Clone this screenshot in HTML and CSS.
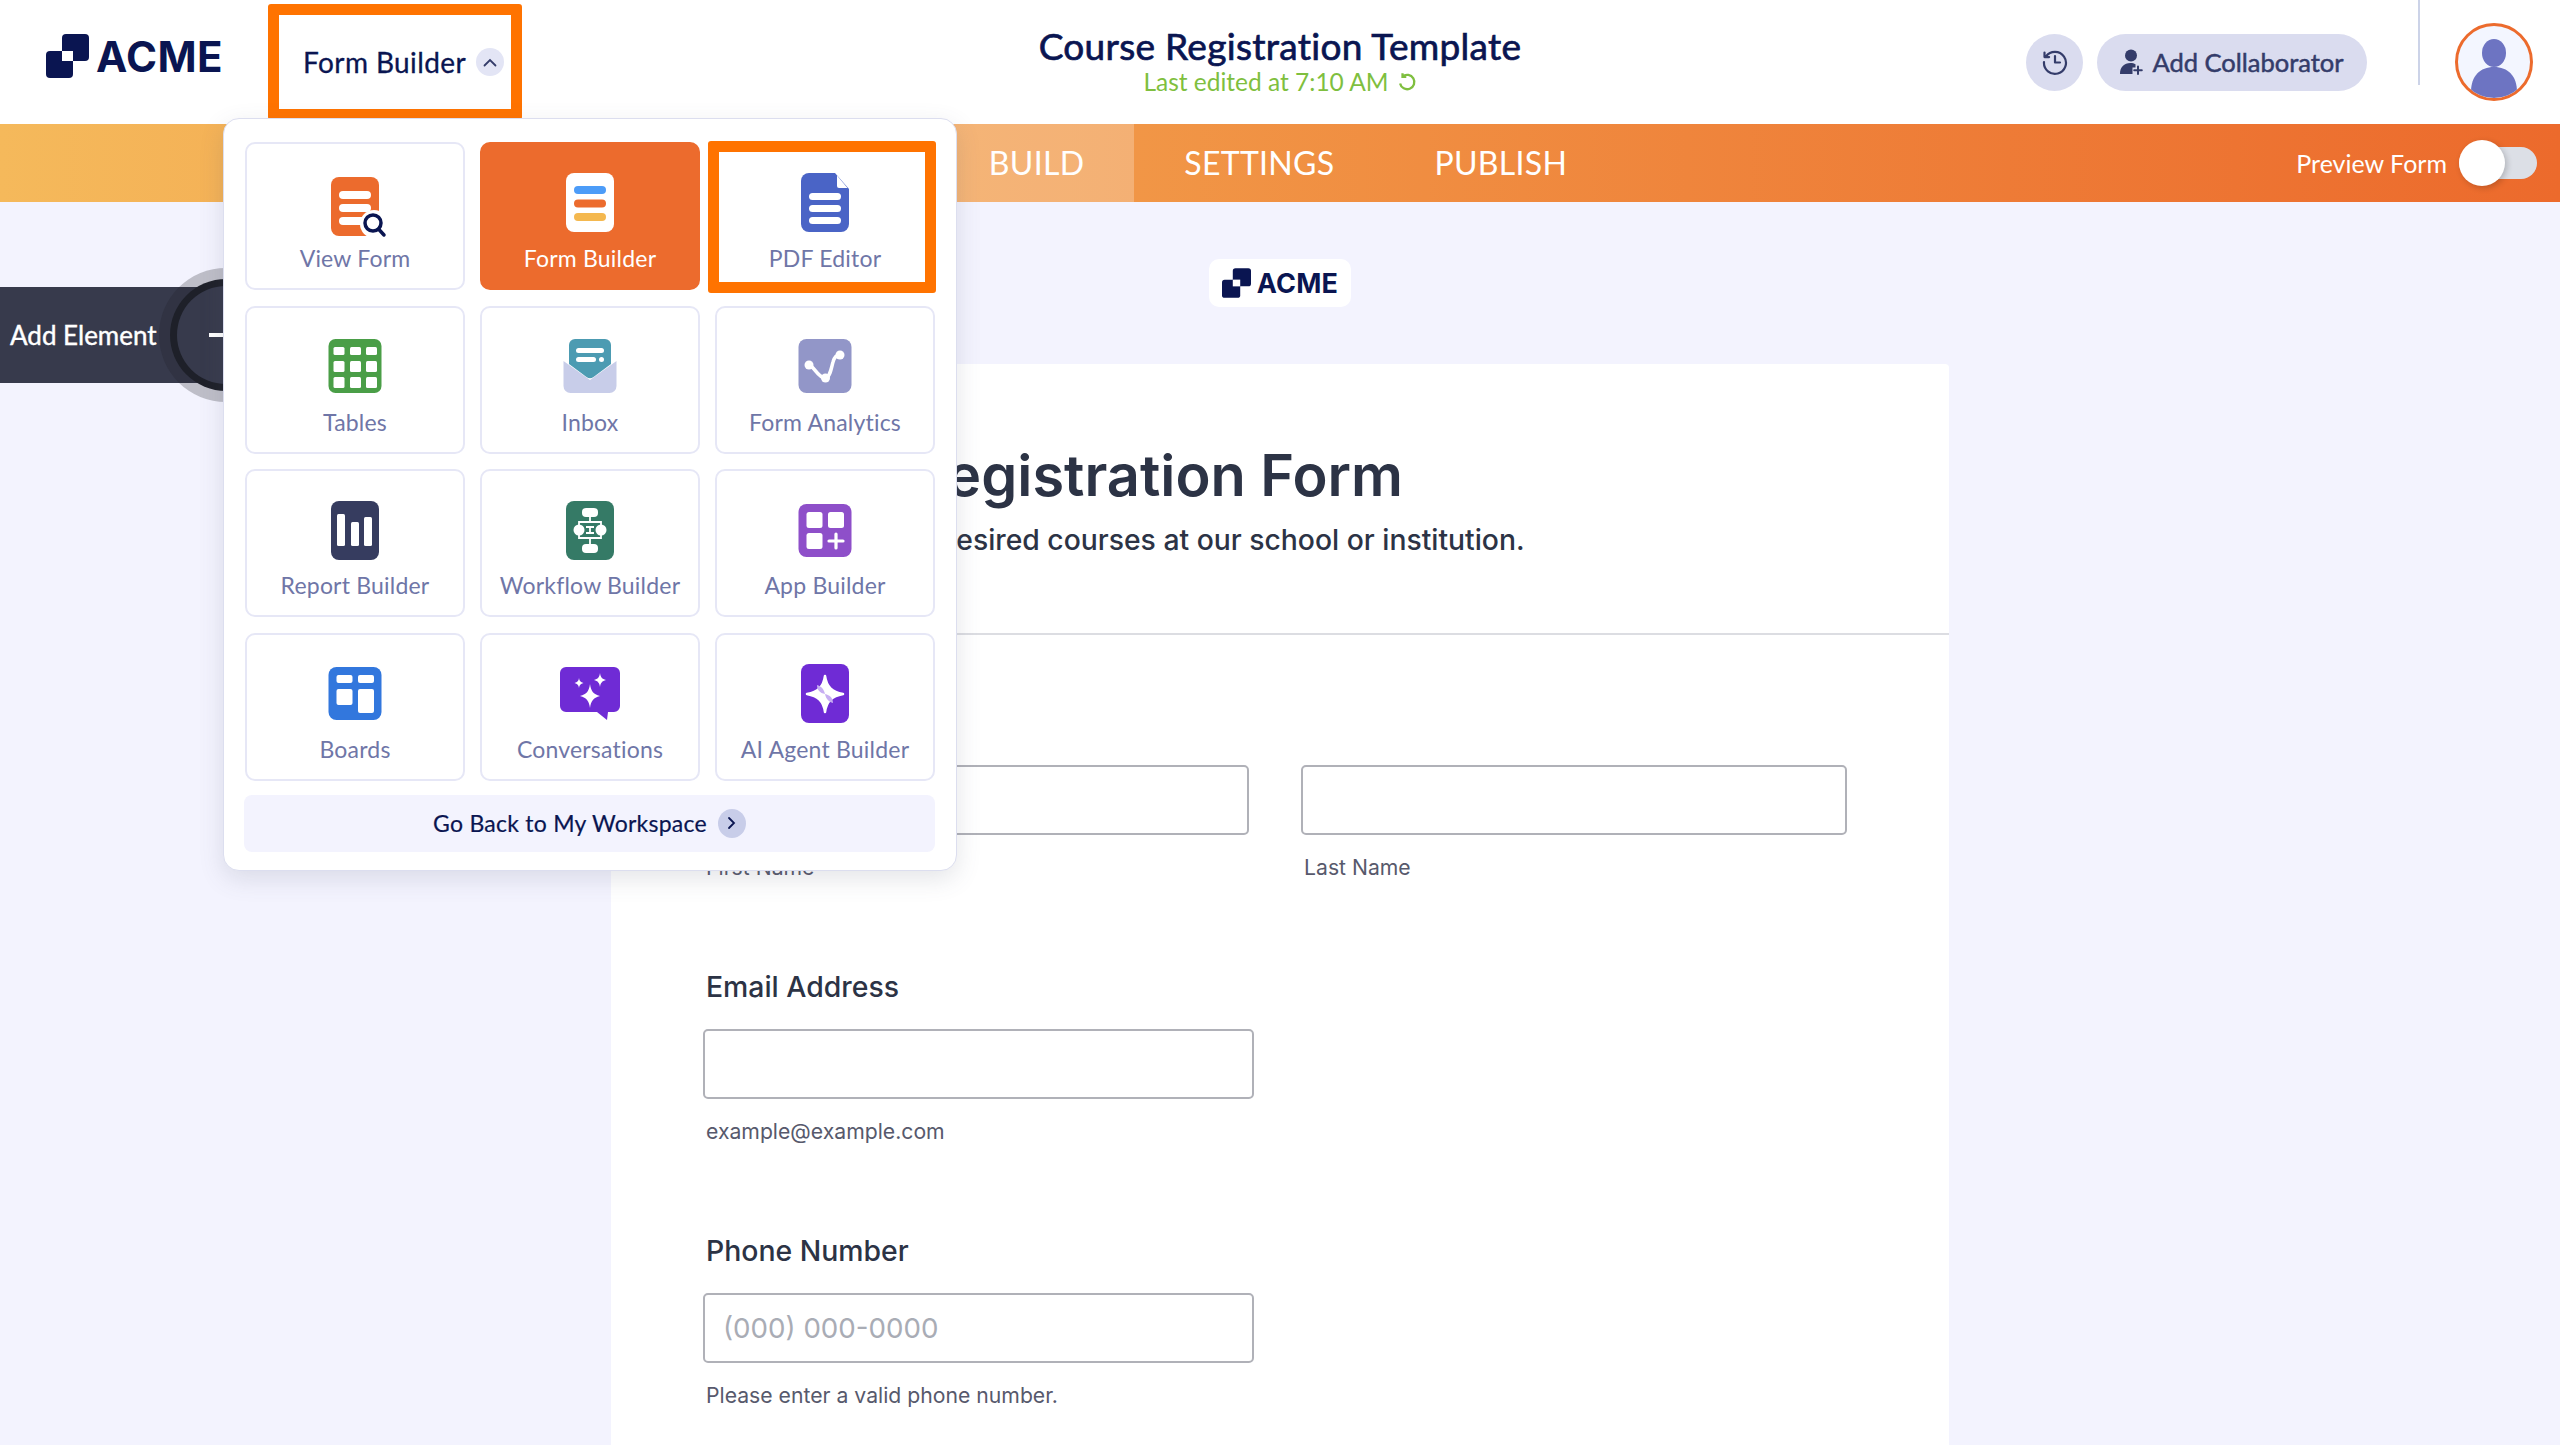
FILE: index.html
```html
<!DOCTYPE html>
<html lang="en">
<head>
    <meta charset="UTF-8">
    <title>Course Registration Template</title>
    <link rel="stylesheet" href="styles.css">
</head>
<body>
    <svg class="defs" width="0" height="0">
        <symbol id="logo" viewBox="0 0 43 44">
            <rect x="16" y="0" width="27" height="27" rx="4" fill="#0a1551"/>
            <rect x="0" y="17" width="27" height="27" rx="4" fill="#0a1551"/>
            <rect x="16" y="17" width="11" height="10" fill="#fff"/>
        </symbol>
    </svg>

    <!-- top bar -->
    <header class="topbar">
        <div class="topbar-left">
            <div class="brand">
                <svg class="brand-mark"><use href="#logo"/></svg>
                <span class="brand-name">ACME</span>
            </div>
            <div class="app-switch">
                <span>Form Builder</span>
                <span class="round-btn">
                    <svg width="14" height="9" viewBox="0 0 14 9"><path d="M1.5 7.5 7 2l5.5 5.5" fill="none" stroke="#343c6a" stroke-width="1.8" stroke-linecap="round"/></svg>
                </span>
                <div class="mark mark-switch"></div>
            </div>
        </div>
        <div class="doc-title">
            <div class="doc-name">Course Registration Template</div>
            <div class="doc-status">Last edited at 7:10 AM
                <svg width="20" height="20" viewBox="0 0 20 20"><path d="M5.5 4.5a7.2 7.2 0 1 1-2.4 7M5.5 1.2v3.6h3.8" fill="none" stroke="#7fbf3f" stroke-width="2.3"/></svg>
            </div>
        </div>
        <div class="topbar-right">
            <button class="history-btn">
                <svg width="28" height="28" viewBox="0 0 28 28"><path d="M5 8.5A11 11 0 1 1 3 14M3.5 4.5v4.6h4.6M14 8v6.5h5" fill="none" stroke="#343c6a" stroke-width="2.2" stroke-linecap="round" stroke-linejoin="round"/></svg>
            </button>
            <button class="collab-btn">
                <svg width="24" height="26" viewBox="0 0 24 26"><circle cx="11" cy="6.5" r="6" fill="#343c6a"/><path d="M0 25c0-7 4-11 10.500-11 2 0 3.500.4 5 1.200v3.300h-3V25z" fill="#343c6a"/><path d="M18 17.500V25M14.200 21.300h7.600" stroke="#343c6a" stroke-width="2" stroke-linecap="round"/></svg>
                Add Collaborator
            </button>
            <div class="avatar">
                <svg width="72" height="72" viewBox="0 0 72 72"><ellipse cx="36" cy="27" rx="12" ry="14" fill="#6d74c2"/><path d="M13 66c0-16 9-25 23-25s23 9 23 25q-10 6-23 6t-23-6z" fill="#6d74c2"/></svg>
            </div>
        </div>
    </header>

    <!-- tabs -->
    <nav class="tabbar">
        <div></div>
        <div class="tabs">
            <a class="tab active">BUILD</a>
            <a class="tab">SETTINGS</a>
            <a class="tab">PUBLISH</a>
        </div>
        <div class="preview">
            <span>Preview Form</span>
            <span class="toggle"><span class="knob"></span></span>
        </div>
    </nav>

    <!-- app menu -->
    <div class="app-menu">
        <div class="app-grid">
            <a class="app-card">
                <svg class="app-icon" viewBox="0 0 70 66"><rect x="11" y="5" width="48" height="59" rx="8" fill="#ec6b2d"/><rect x="19" y="19" width="32" height="8" rx="4" fill="#fff"/><rect x="19" y="32" width="32" height="8" rx="4" fill="#fff"/><rect x="19" y="45" width="32" height="8" rx="4" fill="#fff"/><circle cx="54" cy="52" r="14" fill="#fff"/><circle cx="53" cy="51" r="8" fill="#fff" stroke="#0a1551" stroke-width="3.500"/><path d="M58.500 57 64 63" stroke="#0a1551" stroke-width="3.500" stroke-linecap="round"/></svg>
                <span class="app-label">View Form</span>
            </a>
            <a class="app-card current">
                <svg class="app-icon" viewBox="0 0 70 66"><rect x="11" y="1" width="48" height="59" rx="8" fill="#fff"/><rect x="19" y="14" width="32" height="8" rx="4" fill="#4c9cf8"/><rect x="19" y="27.500" width="32" height="8" rx="4" fill="#ec6b2d"/><rect x="19" y="41" width="32" height="8" rx="4" fill="#f4b84f"/></svg>
                <span class="app-label">Form Builder</span>
            </a>
            <a class="app-card">
                <svg class="app-icon" viewBox="0 0 70 66"><path d="M19 1h26l14 16v35a8 8 0 0 1-8 8H19a8 8 0 0 1-8-8V9a8 8 0 0 1 8-8z" fill="#4a64c6"/><path d="M47 3.500 57.500 16H49a2 2 0 0 1-2-2z" fill="#fff"/><rect x="19" y="21" width="32" height="7" rx="3.500" fill="#fff"/><rect x="19" y="33" width="32" height="7" rx="3.500" fill="#fff"/><rect x="19" y="45" width="32" height="7" rx="3.500" fill="#fff"/></svg>
                <span class="app-label">PDF Editor</span>
                <div class="mark mark-card"></div>
            </a>
            <a class="app-card">
                <svg class="app-icon" viewBox="0 0 70 66"><rect x="8.500" y="3" width="53" height="54" rx="7" fill="#4a9e47"/><g fill="#fff"><rect x="13.500" y="11" width="11" height="8" rx="1.500"/><rect x="30" y="11" width="11" height="8" rx="1.500"/><rect x="46" y="11" width="11" height="8" rx="1.500"/><rect x="13.500" y="25" width="11" height="11" rx="1.500"/><rect x="30" y="25" width="11" height="11" rx="1.500"/><rect x="46" y="25" width="11" height="11" rx="1.500"/><rect x="13.500" y="41" width="11" height="11" rx="1.500"/><rect x="30" y="41" width="11" height="11" rx="1.500"/><rect x="46" y="41" width="11" height="11" rx="1.500"/></g></svg>
                <span class="app-label">Tables</span>
            </a>
            <a class="app-card">
                <svg class="app-icon" viewBox="0 0 70 66"><path d="M8.500 25 35 44l26.500-19v25a7 7 0 0 1-7 7h-39a7 7 0 0 1-7-7z" fill="#c8cde9"/><path d="M20 3h30a6 6 0 0 1 6 6v19L38.500 41a6 6 0 0 1-7 0L14 28V9a6 6 0 0 1 6-6z" fill="#4c9bb2"/><rect x="21" y="12" width="28" height="5" rx="2.500" fill="#fff"/><rect x="21" y="21" width="20" height="5" rx="2.500" fill="#fff"/><circle cx="46.500" cy="23.500" r="2.500" fill="#fff"/></svg>
                <span class="app-label">Inbox</span>
            </a>
            <a class="app-card">
                <svg class="app-icon" viewBox="0 0 70 66"><rect x="8.500" y="3" width="53" height="54" rx="8" fill="#9296c8"/><path d="M19 29c5 1 9 13 16 13 5 0 6-9 8-16 1-4 3-7 7-7" fill="none" stroke="#fff" stroke-width="3.500"/><circle cx="19" cy="29" r="4.500" fill="#fff"/><circle cx="35.500" cy="42" r="4.500" fill="#fff"/><circle cx="50" cy="19" r="4.500" fill="#fff"/></svg>
                <span class="app-label">Form Analytics</span>
            </a>
            <a class="app-card">
                <svg class="app-icon" viewBox="0 0 70 66"><rect x="11" y="2" width="48" height="59" rx="8" fill="#363c5f"/><rect x="17" y="15" width="8" height="32" rx="1.500" fill="#fff"/><rect x="31" y="23" width="8" height="24" rx="1.500" fill="#fff"/><rect x="44" y="18" width="8" height="29" rx="1.500" fill="#fff"/></svg>
                <span class="app-label">Report Builder</span>
            </a>
            <a class="app-card">
                <svg class="app-icon" viewBox="0 0 70 66"><rect x="11" y="2" width="48" height="59" rx="8" fill="#357a66"/><g fill="#fff"><rect x="27" y="9" width="16" height="9" rx="4"/><rect x="27" y="45" width="16" height="9" rx="4"/><circle cx="24" cy="31" r="5.500"/><circle cx="46" cy="31" r="5.500"/><rect x="31" y="27" width="8" height="2"/><rect x="31" y="33" width="8" height="2"/></g><path d="M35 18v5M35 39v6M35 27v8M24 31v-8h22v8M24 31v8h22v-8" fill="none" stroke="#fff" stroke-width="1.800"/></svg>
                <span class="app-label">Workflow Builder</span>
            </a>
            <a class="app-card">
                <svg class="app-icon" viewBox="0 0 70 66"><rect x="8.500" y="5" width="53" height="53" rx="8" fill="#8e4fc9"/><g fill="#fff"><rect x="16.500" y="13" width="16" height="16" rx="2.500"/><rect x="38" y="13" width="16" height="16" rx="2.500"/><rect x="16.500" y="34" width="16" height="16" rx="2.500"/></g><path d="M46 35v14M39 42h14" stroke="#fff" stroke-width="3.200" stroke-linecap="round"/></svg>
                <span class="app-label">App Builder</span>
            </a>
            <a class="app-card">
                <svg class="app-icon" viewBox="0 0 70 66"><rect x="8.500" y="4" width="53" height="53" rx="8" fill="#3277dd"/><g fill="#fff"><rect x="16.500" y="12" width="16" height="8" rx="2"/><rect x="38" y="12" width="16" height="8" rx="2"/><rect x="16.500" y="26" width="16" height="16" rx="2"/><rect x="38" y="26" width="16" height="24" rx="2"/></g></svg>
                <span class="app-label">Boards</span>
            </a>
            <a class="app-card">
                <svg class="app-icon" viewBox="0 0 70 66"><path d="M11 4h48a6 6 0 0 1 6 6v33a6 6 0 0 1-6 6h-6l-1 8-10-8H11a6 6 0 0 1-6-6V10a6 6 0 0 1 6-6z" fill="#6f2bd5"/><path d="M35 21c1 7 3 10 10 12-7 2-9 5-10 12-1-7-3-10-10-12 7-2 9-5 10-12zM45 10c.6 4 2 6 6 7-4 1-5.400 3-6 7-.6-4-2-6-6-7 4-1 5.400-3 6-7zM24 15c.4 3 1.500 4 4.500 5-3 1-4.100 2-4.500 5-.4-3-1.500-4-4.500-5 3-1 4.100-2 4.500-5z" fill="#fff"/></svg>
                <span class="app-label">Conversations</span>
            </a>
            <a class="app-card">
                <svg class="app-icon" viewBox="0 0 70 66"><rect x="11" y="1" width="48" height="59" rx="8" fill="#6f2bd5"/><path d="M35 13c1.500 11 7 16 18 18-11 2-16.500 7-18 18-1.500-11-7-16-18-18 11-2 16.500-7 18-18z" fill="#fff" stroke="#fff" stroke-width="2.500" stroke-linejoin="round"/><path d="M27 22c4 1 7 4 8 9-5-1-8-4-8-9zM43 40c-4-1-7-4-8-9 5 1 8 4 8 9z" fill="#c7aef2"/></svg>
                <span class="app-label">AI Agent Builder</span>
            </a>
        </div>
        <a class="back-link">
            <span>Go Back to My Workspace</span>
            <span class="back-arrow">
                <svg width="9" height="14" viewBox="0 0 9 14"><path d="M2 2l5 5-5 5" fill="none" stroke="#0a1551" stroke-width="1.800" stroke-linecap="round"/></svg>
            </span>
        </a>
    </div>

    <!-- add element tab -->
    <div class="add-element">
        <span>Add Element</span>
        <span class="add-circle"><span class="add-dash"></span></span>
    </div>

    <!-- form preview -->
    <main class="stage">
        <div class="form-logo">
            <svg class="form-logo-mark"><use href="#logo"/></svg>
            <span>ACME</span>
        </div>
        <section class="form-card">
            <div class="form-head">
                <h1>Course Registration Form</h1>
                <p>Register for your desired courses at our school or institution.</p>
            </div>
            <div class="form-body">
                <div class="field">
                    <div class="field-label">&nbsp;</div>
                    <div class="name-row">
                        <div class="name-col">
                            <input type="text" class="wide">
                            <span class="field-sub">First Name</span>
                        </div>
                        <div class="name-col">
                            <input type="text" class="wide">
                            <span class="field-sub">Last Name</span>
                        </div>
                    </div>
                </div>
                <div class="field">
                    <label class="field-label">Email Address</label>
                    <input type="text">
                    <span class="field-sub">example@example.com</span>
                </div>
                <div class="field">
                    <label class="field-label">Phone Number</label>
                    <input type="text" placeholder="(000) 000-0000">
                    <span class="field-sub">Please enter a valid phone number.</span>
                </div>
            </div>
        </section>
    </main>
</body>
</html>
```

FILE: styles.css
```css
* {
    box-sizing: border-box;
}

html, body {
    height: 1445px;
    margin: 0;
    overflow: hidden;
}

body {
    position: relative;
    font-family: 'Lato', 'Liberation Sans', sans-serif;
    background-color: #f3f3fe;
    color: #0a1551;
}

.defs {
    position: absolute;
}

/* top bar */
.topbar {
    height: 124px;
    padding: 0 27px;
    display: grid;
    grid-template-columns: 1fr auto 1fr;
    align-items: center;
    background-color: #fff;
}

.topbar-left {
    display: flex;
    align-items: center;
    padding-left: 19px;
}

.brand {
    display: flex;
    align-items: center;
    gap: 7px;
    width: 257px;
    margin-bottom: 12px;
}

.brand-mark {
    width: 43px;
    height: 44px;
}

.brand-name {
    font-family: 'Inter', sans-serif;
    font-size: 42px;
    font-weight: 700;
    letter-spacing: .4px;
}

.app-switch {
    position: relative;
    display: flex;
    align-items: center;
    gap: 10px;
    font-size: 28px;
    letter-spacing: .4px;
    -webkit-text-stroke: .3px;
}

.round-btn {
    width: 28px;
    height: 28px;
    border-radius: 50%;
    background-color: #e3e5f5;
    display: flex;
    align-items: center;
    justify-content: center;
}

/* orange marks drawn over the screenshot */
.mark {
    position: absolute;
    border: 11px solid #ff7300;
    border-radius: 3px;
}

.mark-switch {
    top: 50%;
    margin-top: -58px;
    left: -35px;
    width: 254px;
    height: 116px;
}

.mark-card {
    top: -3px;
    left: -9px;
    right: -3px;
    bottom: -5px;
}

.doc-title {
    text-align: center;
    padding-bottom: 4px;
}

.doc-name {
    font-size: 37px;
    line-height: 44px;
    letter-spacing: .3px;
    -webkit-text-stroke: .7px;
}

.doc-status {
    display: flex;
    align-items: center;
    justify-content: center;
    gap: 8px;
    font-size: 24.500px;
    line-height: 28px;
    color: #7fbf3f;
}

.topbar-right {
    display: flex;
    align-items: center;
    justify-content: flex-end;
    position: relative;
}

.history-btn, .collab-btn {
    height: 57px;
    border: none;
    border-radius: 29px;
    background-color: #dadcef;
    color: #343c6a;
    font-family: inherit;
    display: flex;
    align-items: center;
    justify-content: center;
}

.history-btn {
    width: 57px;
    padding: 0;
    margin-right: 14px;
}

.collab-btn {
    width: 270px;
    gap: 8px;
    padding: 0;
    font-size: 25.500px;
    margin-right: 88px;
    -webkit-text-stroke: .5px;
}

.avatar {
    width: 78px;
    height: 78px;
    padding: 0;
    border: 3px solid #ec6b2d;
    border-radius: 50%;
    background-color: #f3f6ff;
    overflow: hidden;
}

.avatar::before {
    content: "";
    position: absolute;
    top: -58px;
    height: 120px;
    right: 113px;
    border-left: 2px solid #ccd3e8;
}

/* tab bar */
.tabbar {
    height: 78px;
    padding: 0 23px 0 23px;
    display: grid;
    grid-template-columns: 1fr auto 1fr;
    align-items: center;
    background: linear-gradient(90deg, #f5b95b, #ec6a2c);
    color: #fff;
}

.tabs {
    display: flex;
    height: 100%;
    padding-right: 4px;
}

.tab {
    display: flex;
    align-items: center;
    padding: 0 50px 2px;
    font-size: 32px;
    letter-spacing: .3px;
}

.tab.active {
    background-color: rgba(255, 255, 255, .25);
}

.preview {
    display: flex;
    align-items: center;
    justify-content: flex-end;
    gap: 12px;
    font-size: 25px;
}

.toggle {
    position: relative;
    display: block;
    width: 78px;
    height: 32px;
    border-radius: 16px;
    background-color: #dcdfe6;
}

.knob {
    position: absolute;
    top: -7px;
    left: 0;
    width: 46px;
    height: 46px;
    border-radius: 50%;
    background-color: #fff;
    box-shadow: 2px 2px 6px rgba(0, 0, 0, .2);
}

/* app menu */
.app-menu {
    position: absolute;
    z-index: 5;
    top: 118px;
    left: 223px;
    width: 734px;
    height: 753px;
    padding: 23px 21px 0 20px;
    background-color: #fff;
    border: 1px solid #dcdeef;
    border-radius: 16px;
    box-shadow: 0 8px 24px rgba(84, 95, 111, .16);
}

.app-grid {
    display: grid;
    grid-template-columns: repeat(3, 220px);
    grid-auto-rows: 148px;
    gap: 15.500px 15px;
    padding-left: 1px;
}

.app-card {
    position: relative;
    display: flex;
    flex-direction: column;
    align-items: center;
    padding-top: 28px;
    border: 2px solid #e6e7f6;
    border-radius: 10px;
    color: #6f76a7;
}

.app-card.current {
    background-color: #ec6b2d;
    border-color: #ec6b2d;
    color: #fff;
}

.app-icon {
    width: 70px;
    height: 66px;
    overflow: visible;
}

.app-label {
    margin-top: 5px;
    font-size: 23px;
    line-height: 30px;
    letter-spacing: .2px;
    white-space: nowrap;
}

.back-link {
    margin-top: 14px;
    height: 57px;
    display: flex;
    align-items: center;
    justify-content: center;
    gap: 11px;
    background-color: #f3f3fe;
    border-radius: 8px;
    font-size: 23px;
    letter-spacing: .25px;
    -webkit-text-stroke: .2px;
}

.back-arrow {
    width: 28px;
    height: 29px;
    border-radius: 50%;
    background-color: #c8cde9;
    display: flex;
    align-items: center;
    justify-content: center;
}

/* add element */
.add-element {
    position: absolute;
    z-index: 2;
    top: 287px;
    left: 0;
    width: 200px;
    height: 96px;
    padding-left: 10px;
    display: flex;
    align-items: center;
    background-color: #373a4c;
    color: #fff;
    font-size: 26px;
    -webkit-text-stroke: .4px;
}

.add-circle {
    position: absolute;
    top: -1px;
    left: 177px;
    width: 98px;
    height: 98px;
    border-radius: 50%;
    background-color: #373a4c;
    box-shadow: 0 0 0 7px #1e2029, 0 0 0 18px rgba(30, 32, 41, .25);
}

.add-dash {
    position: absolute;
    top: 47px;
    left: 32px;
    width: 20px;
    height: 4px;
    background-color: #fff;
}

/* form preview */
.stage {
    display: flex;
    flex-direction: column;
    align-items: center;
    padding-top: 57px;
}

.form-logo {
    width: 142px;
    height: 48px;
    display: flex;
    align-items: center;
    justify-content: center;
    gap: 6px;
    background-color: #fff;
    border-radius: 10px;
    font-family: 'Inter', sans-serif;
    font-size: 27px;
    font-weight: 700;
    letter-spacing: .2px;
}

.form-logo-mark {
    width: 29px;
    height: 30px;
}

.form-card {
    width: 1338px;
    margin-top: 57px;
    background-color: #fff;
    font-family: 'Inter', sans-serif;
    color: #2c3345;
    border-radius: 4px 4px 0 0;
}

.form-head {
    height: 271px;
    padding: 77px 93px 0 95px;
    border-bottom: 2px solid #dcdde2;
}

.form-head h1 {
    margin: 0 0 0 -12px;
    font-size: 57.700px;
    font-weight: 600;
    line-height: 68px;
}

.form-head p {
    margin: 12px 0 0;
    font-size: 28.300px;
    font-weight: 500;
    line-height: 38px;
}

.form-body {
    padding: 69px 93px 80px 92px;
    display: flex;
    flex-direction: column;
    gap: 87px;
}

.field {
    display: flex;
    flex-direction: column;
    align-items: flex-start;
}

.field-label {
    padding-left: 3px;
    margin-bottom: 23px;
    font-size: 28.400px;
    font-weight: 500;
    line-height: 38px;
}

input {
    display: block;
    width: 551px;
    height: 70px;
    padding: 0 18px;
    border: 2px solid #b0b1b8;
    border-radius: 5px;
    background-color: #fff;
    font-family: 'Inter', sans-serif;
    font-size: 27.700px;
    color: #2c3345;
}

input::placeholder {
    color: #a9acb5;
}

input.wide {
    width: 546px;
}

.name-row {
    display: flex;
    gap: 52px;
}

.field-sub {
    display: block;
    padding-left: 3px;
    margin-top: 18px;
    font-size: 21.200px;
    line-height: 28px;
    color: #57596c;
}
```
